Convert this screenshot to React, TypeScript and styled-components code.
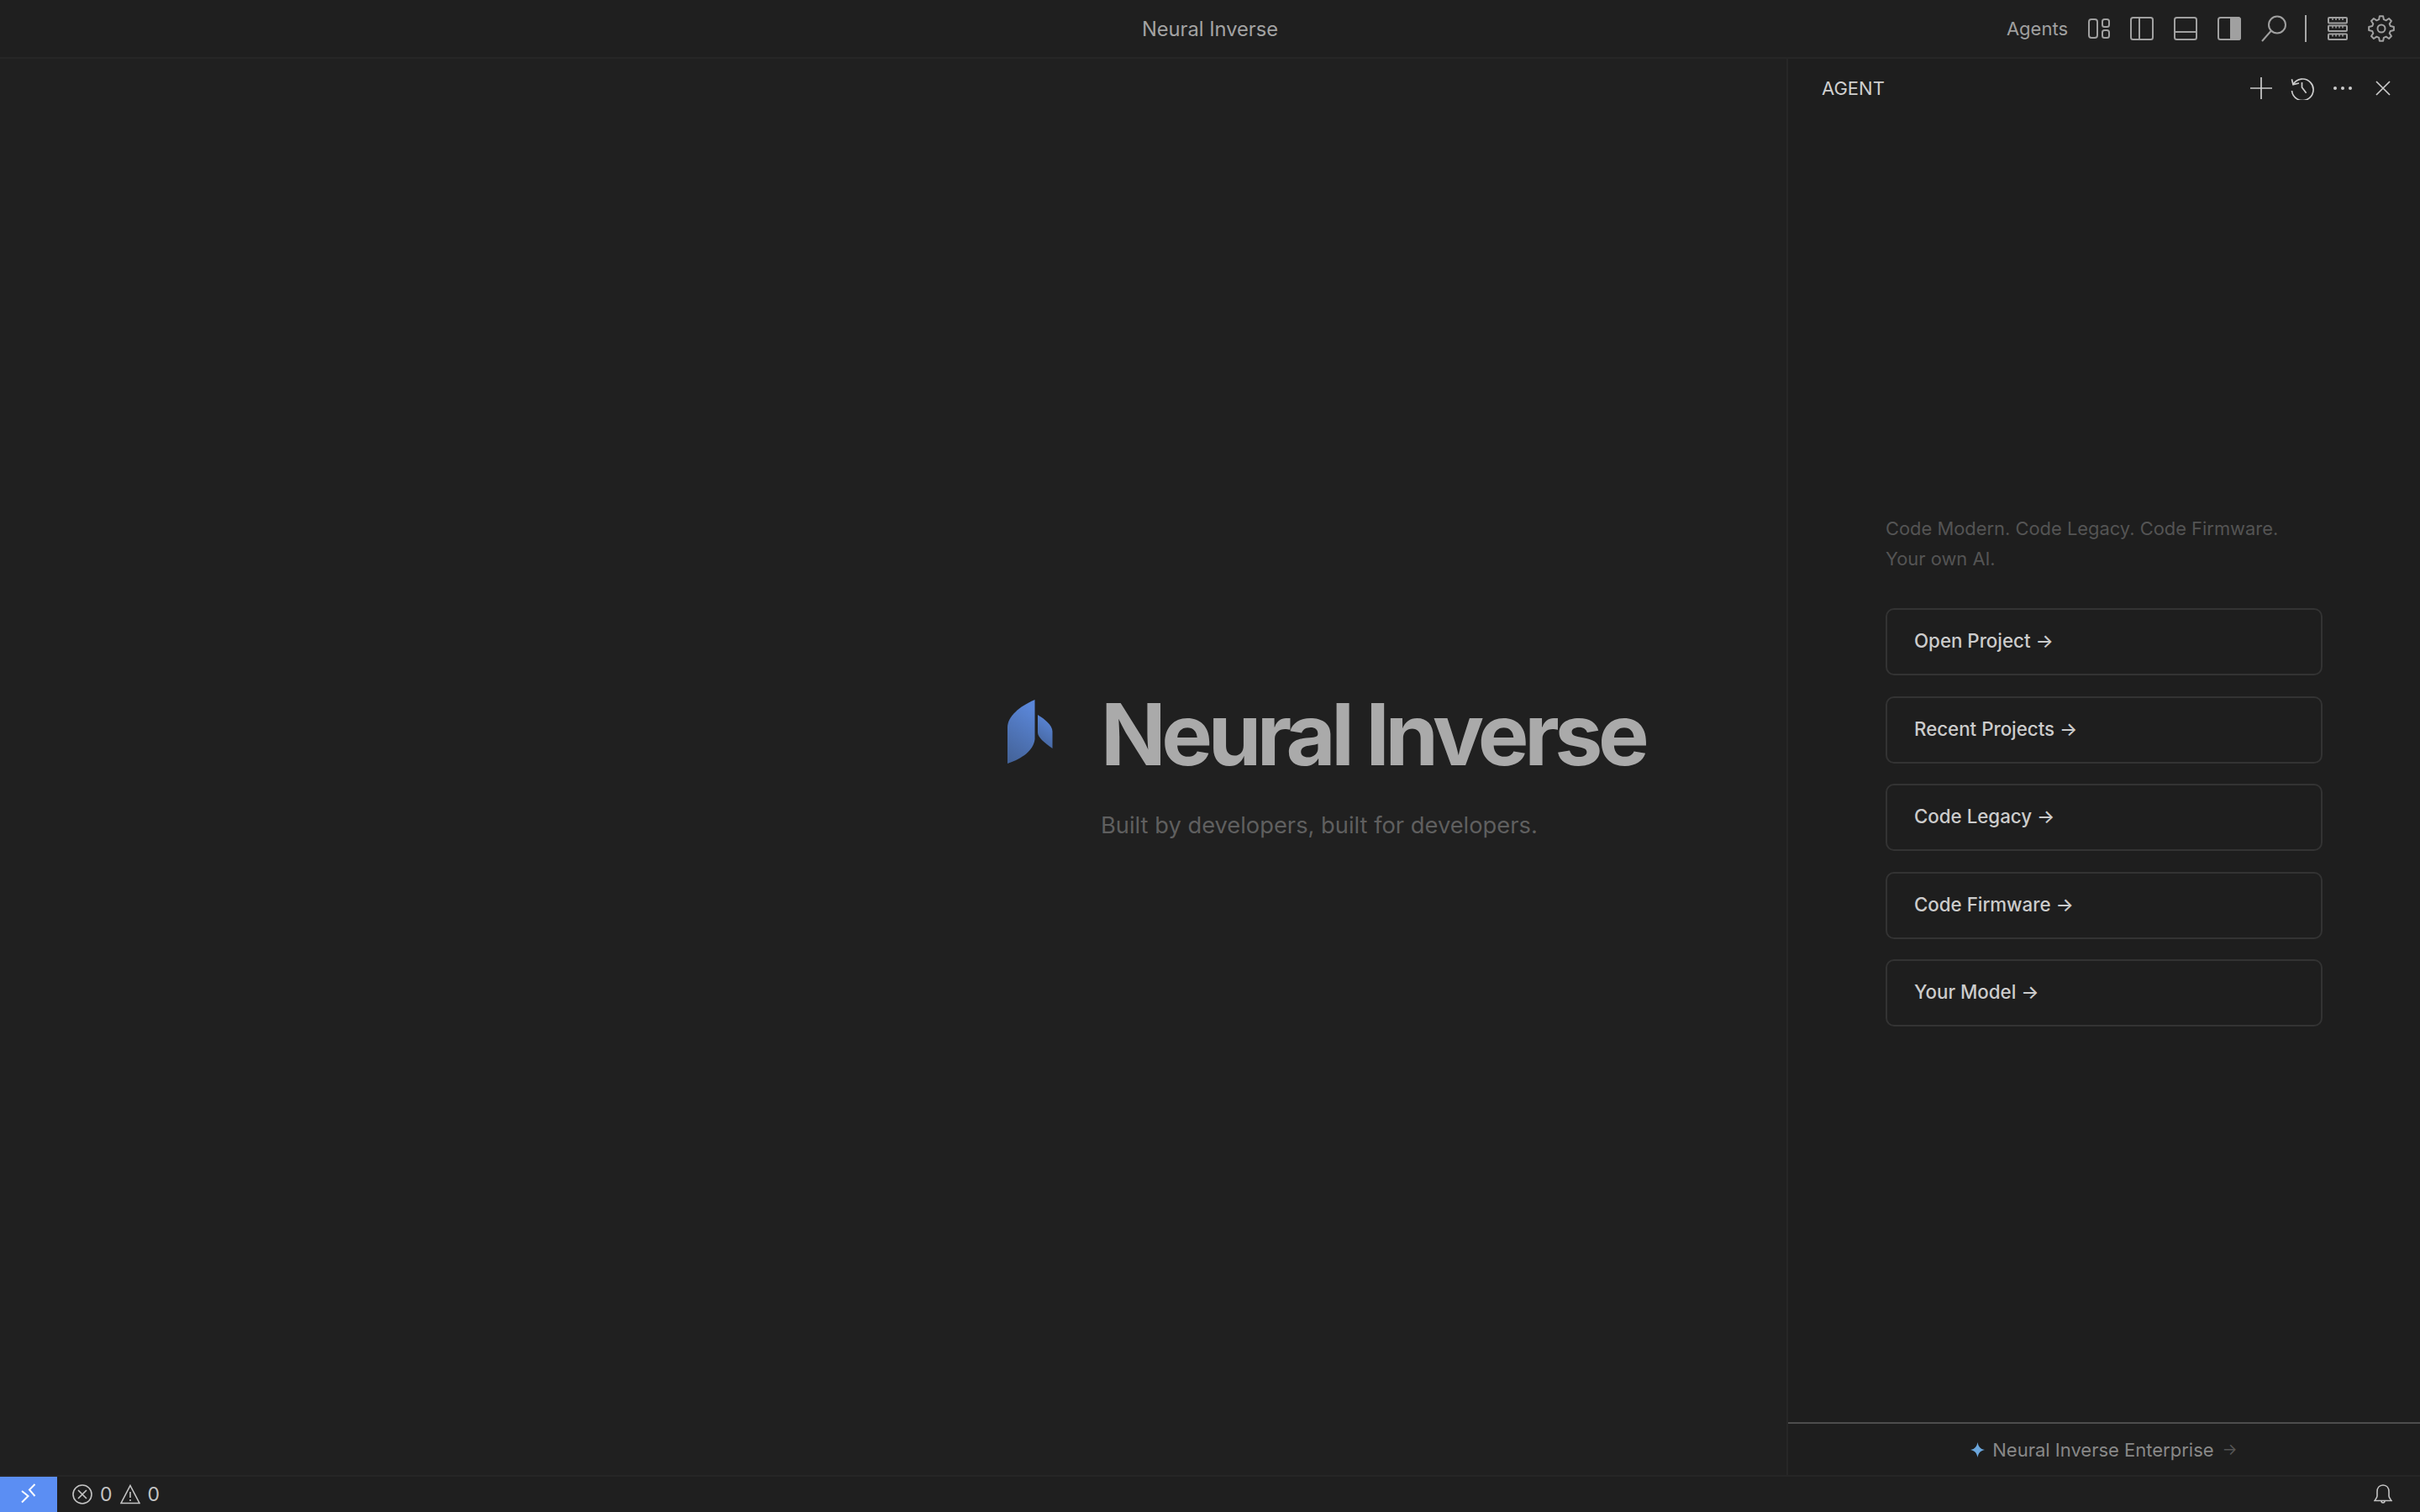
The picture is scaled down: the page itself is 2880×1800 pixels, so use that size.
import React from 'react';
import styled, { createGlobalStyle } from 'styled-components';

const GlobalStyle = createGlobalStyle`
  html, body {
    margin: 0;
    padding: 0;
    background: #202020;
  }
  * {
    box-sizing: border-box;
  }
`;

const Page = styled.div`
  width: 2880px;
  height: 1800px;
  display: grid;
  grid-template-rows: 70px 1fr 44px;
  background: #202020;
  font-family: Inter, 'Liberation Sans', sans-serif;
  overflow: hidden;
`;

const TitleBar = styled.header`
  display: grid;
  grid-template-columns: 1fr auto 1fr;
  align-items: center;
  background: #1f1f1f;
  border-bottom: 2px solid #262626;
`;

const WindowTitle = styled.div`
  grid-column: 2;
  font-size: 23.7px;
  color: #a3a3a3;
`;

const TitleActions = styled.div`
  grid-column: 3;
  justify-self: end;
  display: flex;
  align-items: center;
  padding-right: 30px;
  color: #a0a0a0;
`;

const AgentsLabel = styled.span`
  font-size: 22px;
  margin-right: 24px;
`;

const LineIcon = styled.svg<{ $gap?: number; $stroke?: number }>`
  display: block;
  flex: none;
  margin-right: ${(p) => p.$gap ?? 0}px;
  fill: none;
  stroke: currentColor;
  stroke-width: ${(p) => p.$stroke ?? 2};
`;

const Separator = styled.div`
  width: 2px;
  height: 32px;
  background: #a8a8a8;
  margin-right: 25px;
`;

const Workspace = styled.div`
  display: flex;
  min-height: 0;
`;

const Editor = styled.main`
  flex: 1;
  padding: 741px 0 0 1199px;
`;

const BrandRow = styled.div`
  height: 120px;
  display: flex;
  align-items: center;
`;

const Logo = styled.svg`
  display: block;
  flex: none;
`;

const Brand = styled.h1`
  margin: 6px 0 0 57px;
  font-size: 102px;
  line-height: 120px;
  font-weight: 700;
  letter-spacing: -0.053em;
  color: #aaaaaa;
  white-space: nowrap;
`;

const Tagline = styled.p`
  margin: 32px 0 0 111px;
  font-size: 27.3px;
  line-height: 40px;
  color: #5f5f5f;
  white-space: nowrap;
`;

const Sidebar = styled.aside`
  flex: none;
  width: 754px;
  display: flex;
  flex-direction: column;
  background: #1e1e1e;
  border-left: 2px solid #272727;
`;

const SidebarHeader = styled.div`
  height: 70px;
  display: flex;
  align-items: center;
  padding: 0 35px 0 40px;
  color: #cccccc;
`;

const SidebarTitle = styled.span`
  flex: 1;
  font-size: 22px;
  color: #cfcfcf;
`;

const HeaderActions = styled.div`
  display: flex;
  align-items: center;
  gap: 22px;
`;

const Dots = styled.svg`
  display: block;
  fill: currentColor;
  margin-right: 5px;
`;

const SidebarBody = styled.div`
  flex: 1;
  display: flex;
  flex-direction: column;
  padding: 471px 116px 0;
`;

const Description = styled.p`
  margin: 0 0 41px;
  font-size: 21.9px;
  line-height: 36px;
  color: #545454;
`;

const ActionList = styled.div`
  display: flex;
  flex-direction: column;
  gap: 24.5px;
`;

const ActionButton = styled.button`
  height: 80px;
  padding: 0 32px 3px;
  text-align: left;
  font-family: inherit;
  font-size: 22.3px;
  font-weight: 500;
  color: #cccccc;
  background: transparent;
  border: 2px solid #333333;
  border-radius: 10px;
`;

const SidebarFooter = styled.div`
  height: 63px;
  display: flex;
  align-items: center;
  justify-content: center;
  gap: 9px;
  border-top: 2px solid #4d4d4d;
  font-size: 22px;
  color: #888888;
`;

const Sparkle = styled.svg`
  display: block;
  fill: #6ba6dc;
`;

const FooterArrow = styled.span`
  font-size: 19px;
  color: #555555;
  margin-left: 1px;
`;

const StatusBar = styled.footer`
  display: flex;
  align-items: stretch;
  background: #1f1f1f;
  border-top: 2px solid #262626;
  color: #c4c4c4;
  font-size: 23px;
`;

const RemoteButton = styled.div`
  width: 68px;
  background: #5b8ef3;
  color: #ffffff;
`;

const StatusItems = styled.div`
  flex: 1;
  display: flex;
  align-items: center;
  gap: 9px;
  padding-left: 18px;
`;

const BellSlot = styled.div`
  display: flex;
  align-items: center;
  padding-right: 33px;
`;

const actions = ['Open Project', 'Recent Projects', 'Code Legacy', 'Code Firmware', 'Your Model'];

// eight teeth around a 32px box, one tooth pointing straight up
const gearOutline = (() => {
  const point = (r: number, deg: number) => {
    const a = ((deg - 90) * Math.PI) / 180;
    return `${(16 + r * Math.cos(a)).toFixed(2)} ${(16 + r * Math.sin(a)).toFixed(2)}`;
  };
  const parts: string[] = [];
  for (let i = 0; i < 8; i++) {
    const deg = i * 45;
    parts.push(point(11.2, deg - 15), point(15, deg - 8), point(15, deg + 8), point(11.2, deg + 15));
  }
  return `M${parts.join('L')}Z`;
})();

const LogoMark = () => (
  <Logo width="54" height="76" viewBox="0 0 54 76">
    <defs>
      <linearGradient id="logoFill" x1="0.5" y1="0" x2="0.2" y2="1">
        <stop offset="0" stopColor="#5a86d8" />
        <stop offset="1" stopColor="#446399" />
      </linearGradient>
    </defs>
    <path d="M32.5 0V47C31 60 18 70 0 76V33C0 20 14 8 32.5 0Z" fill="url(#logoFill)" />
    <path d="M36 18C44 23 53.5 30 53.5 38V58C44 51 36 45 36 39Z" fill="url(#logoFill)" />
  </Logo>
);

const App: React.FC = () => {
  return (
    <Page>
      <GlobalStyle />
      <TitleBar>
        <WindowTitle>Neural Inverse</WindowTitle>
        <TitleActions>
          <AgentsLabel>Agents</AgentsLabel>
          <LineIcon width="26" height="24" viewBox="0 0 26 24" $gap={24}>
            <rect x="1" y="1" width="10" height="22" rx="3" />
            <rect x="17" y="1" width="8" height="9" rx="2.5" />
            <rect x="17" y="14" width="8" height="9" rx="2.5" />
          </LineIcon>
          <LineIcon width="28" height="28" viewBox="0 0 28 28" $gap={24}>
            <rect x="1" y="1" width="26" height="26" rx="2.5" />
            <path d="M11 1V27" />
          </LineIcon>
          <LineIcon width="28" height="28" viewBox="0 0 28 28" $gap={24}>
            <rect x="1" y="1" width="26" height="26" rx="2.5" />
            <path d="M1 18H27" />
          </LineIcon>
          <LineIcon width="28" height="28" viewBox="0 0 28 28" $gap={24}>
            <rect x="1" y="1" width="26" height="26" rx="2.5" />
            <path d="M16 1H24.5A2.5 2.5 0 0 1 27 3.500V24.500A2.500 2.500 0 0 1 24.500 27H16Z" fill="currentColor" />
          </LineIcon>
          <LineIcon width="30" height="32" viewBox="0 0 30 32" $gap={22}>
            <circle cx="19" cy="11.500" r="10" />
            <path d="M12 18.500L1 31" />
          </LineIcon>
          <Separator />
          <LineIcon width="24" height="28" viewBox="0 0 24 28" $gap={24}>
            <rect x="1" y="1" width="22" height="6.500" rx="1" />
            <rect x="1" y="10.500" width="22" height="6.500" rx="1" />
            <rect x="1" y="20.500" width="22" height="6.500" rx="1" />
            <path d="M6 1V4M10 1V4M14 1V4M18 1V4M6 10.500V13.500M10 10.500V13.500M14 10.500V13.500M18 10.500V13.500M6 20.500V23.500M10 20.500V23.500M14 20.500V23.500M18 20.500V23.500" strokeWidth="1.500" />
          </LineIcon>
          <LineIcon width="32" height="32" viewBox="0 0 32 32">
            <path d={gearOutline} strokeLinejoin="round" />
            <circle cx="16" cy="16" r="4.500" />
          </LineIcon>
        </TitleActions>
      </TitleBar>

      <Workspace>
        <Editor>
          <BrandRow>
            <LogoMark />
            <Brand>Neural Inverse</Brand>
          </BrandRow>
          <Tagline>Built by developers, built for developers.</Tagline>
        </Editor>

        <Sidebar>
          <SidebarHeader>
            <SidebarTitle>AGENT</SidebarTitle>
            <HeaderActions>
              <LineIcon width="26" height="26" viewBox="0 0 26 26" $stroke={1.7}>
                <path d="M13 0V26M0 13H26" />
              </LineIcon>
              <LineIcon width="28" height="28" viewBox="0 0 28 28" $stroke={1.7}>
                <path d="M3 9.700A12.800 12.800 0 1 1 1.500 17" />
                <path d="M1.400 3.300L3 9.700L10 8" />
                <path d="M13.500 7V13L18.600 19.700" />
              </LineIcon>
              <Dots width="24" height="6" viewBox="0 0 24 6">
                <circle cx="3" cy="3" r="2" />
                <circle cx="12" cy="3" r="2" />
                <circle cx="21" cy="3" r="2" />
              </Dots>
              <LineIcon width="18" height="18" viewBox="0 0 18 18" $stroke={1.7}>
                <path d="M1 1L17 17M17 1L1 17" />
              </LineIcon>
            </HeaderActions>
          </SidebarHeader>
          <SidebarBody>
            <Description>
              Code Modern. Code Legacy. Code Firmware.
              <br />
              Your own AI.
            </Description>
            <ActionList>
              {actions.map((label) => (
                <ActionButton key={label}>{label} →</ActionButton>
              ))}
            </ActionList>
          </SidebarBody>
          <SidebarFooter>
            <Sparkle width="17" height="18" viewBox="0 0 17 18">
              <path d="M8.500 0C9.500 5 11.500 8 17 9C11.500 10 9.500 13 8.500 18C7.500 13 5.500 10 0 9C5.500 8 7.500 5 8.500 0Z" />
            </Sparkle>
            <span>Neural Inverse Enterprise</span>
            <FooterArrow>→</FooterArrow>
          </SidebarFooter>
        </Sidebar>
      </Workspace>

      <StatusBar>
        <RemoteButton>
          <LineIcon width="68" height="42" viewBox="0 0 68 42">
            <path d="M26 17L33.500 23L26 30.500M41.500 9L35 15.500L41.500 23" />
          </LineIcon>
        </RemoteButton>
        <StatusItems>
          <LineIcon width="24" height="24" viewBox="0 0 24 24" $stroke={1.6}>
            <circle cx="12" cy="12" r="11" />
            <path d="M7 7L17 17M17 7L7 17" />
          </LineIcon>
          <span>0</span>
          <LineIcon width="24" height="24" viewBox="0 0 24 24" $stroke={1.6}>
            <path d="M12 1.500L23 22.500H1Z" />
            <path d="M12 9V16M12 18V20" />
          </LineIcon>
          <span>0</span>
        </StatusItems>
        <BellSlot>
          <LineIcon width="22" height="24" viewBox="0 0 22 24" $stroke={1.6}>
            <path d="M11 1C6.500 1 4 4.500 4 9V14C4 16 2 18 1 19.500H21C20 18 18 16 18 14V9C18 4.500 15.500 1 11 1Z" />
            <path d="M9 19.500A2 2.500 0 0 0 13 19.500" />
          </LineIcon>
        </BellSlot>
      </StatusBar>
    </Page>
  );
};

export default App;
